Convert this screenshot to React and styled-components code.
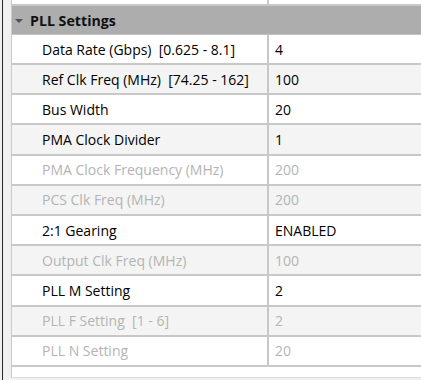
import React from "react";
import styled, { createGlobalStyle } from "styled-components";

const GlobalStyle = createGlobalStyle`
  html, body {
    margin: 0;
    padding: 0;
    background: #f0f0f0;
  }
  body {
    font-family: "Open Sans", "Noto Sans", sans-serif;
    overflow: hidden;
  }
`;

const rows = [
  { label: "Data Rate (Gbps)  [0.625 - 8.1]", value: "4" },
  { label: "Ref Clk Freq (MHz)  [74.25 - 162]", value: "100" },
  { label: "Bus Width", value: "20" },
  { label: "PMA Clock Divider", value: "1" },
  { label: "PMA Clock Frequency (MHz)", value: "200", disabled: true },
  { label: "PCS Clk Freq (MHz)", value: "200", disabled: true },
  { label: "2:1 Gearing", value: "ENABLED" },
  { label: "Output Clk Freq (MHz)", value: "100", disabled: true },
  { label: "PLL M Setting", value: "2" },
  { label: "PLL F Setting  [1 - 6]", value: "2", disabled: true },
  { label: "PLL N Setting", value: "20", disabled: true },
];

const Window = styled.div`
  width: 421px;
  height: 380px;
  display: flex;
  box-sizing: border-box;
  padding-left: 2px;
`;

const Rail = styled.div`
  border-left: 1px solid #262626;
  padding-left: 8px;
  flex: 1;
  display: flex;
`;

const Grid = styled.div`
  flex: 1;
  display: flex;
  flex-direction: column;
`;

const Table = styled.div`
  border-left: 1px solid #c9c9c9;
  border-bottom: 1px solid #dcdcdc;
  background: #ffffff;
  padding-bottom: 10px;
`;

const Stub = styled.div`
  height: 4px;
  display: grid;
  grid-template-columns: 255px 2px 1fr;
  &::before {
    content: "";
  }
  &::after {
    content: "";
    background: #c8c8c8;
  }
`;

const Header = styled.div`
  height: 28px;
  border-top: 2px solid #c8c8c8;
  border-bottom: 1px solid #c2c2c2;
  background: #adadad;
  display: flex;
  align-items: center;
  gap: 7px;
  padding-left: 3px;
  font-weight: 700;
  font-size: 14.2px;
  color: #111;
`;

const Caret = styled.span`
  width: 0;
  height: 0;
  border-left: 4px solid transparent;
  border-right: 4px solid transparent;
  border-top: 4px solid #505050;
  margin-top: 1px;
`;

const Row = styled.div`
  height: ${(p) => (p.$first ? 30 : 30.2)}px;
  box-sizing: border-box;
  display: grid;
  grid-template-columns: 255px 2px 1fr;
  border-bottom: 2px solid #c8c8c8;
  background: ${(p) => (p.$alt ? "#f3f4f3" : "#ffffff")};
  color: ${(p) => (p.$disabled ? "#b4b4b4" : "#000000")};
  font-size: 14px;
`;

const Cell = styled.div`
  display: flex;
  align-items: center;
  padding-left: ${(p) => p.$pad}px;
  white-space: pre;
  overflow: hidden;
`;

const Divider = styled.div`
  background: #c8c8c8;
`;

export default function App() {
  return (
    <>
      <GlobalStyle />
      <Window>
        <Rail>
          <Grid>
            <Table>
              <Stub />
              <Header>
                <Caret />
                PLL Settings
              </Header>
              {rows.map((r, i) => (
                <Row key={r.label} $alt={i % 2 === 1} $disabled={r.disabled} $first={i === 0}>
                  <Cell $pad={30}>{r.label}</Cell>
                  <Divider />
                  <Cell $pad={6}>{r.value}</Cell>
                </Row>
              ))}
            </Table>
          </Grid>
        </Rail>
      </Window>
    </>
  );
}
